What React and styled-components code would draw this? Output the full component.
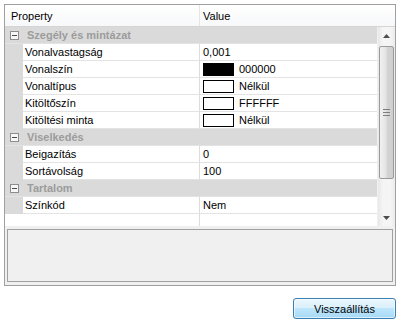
import React from "react"
import styled, { createGlobalStyle } from "styled-components"

const GlobalStyle = createGlobalStyle`
  body {
    margin: 0;
    background: #fff;
    font-family: "Liberation Sans", Arial, sans-serif;
    font-size: 11px;
    color: #000;
  }
`

const Page = styled.div`
  display: flex;
  flex-direction: column;
  align-items: flex-start;
  padding: 4px 0 0 4px;
`

const Frame = styled.div`
  box-sizing: border-box;
  width: 392px;
  height: 282px;
  border: 1px solid #a0a0a0;
  background: #f0f0f0;
  display: flex;
  flex-direction: column;
`

const Grid = styled.div`
  height: 221px;
  display: flex;
  flex-direction: column;
  background: #fff;
`

const Header = styled.div`
  box-sizing: border-box;
  height: 22px;
  display: grid;
  grid-template-columns: 195px 1fr;
  background: linear-gradient(#ffffff, #f7f8fa);
  border-bottom: 1px solid #d5d5d5;
`

const HeaderCell = styled.div`
  display: flex;
  align-items: center;
  padding-left: ${p => p.$pad}px;
  border-right: ${p => (p.$divider ? "1px solid #e5e5e5" : "none")};
`

const Body = styled.div`
  flex: 1;
  display: flex;
  min-height: 0;
`

const Rows = styled.div`
  flex: 1;
  display: flex;
  flex-direction: column;
`

const CategoryRow = styled.div`
  box-sizing: border-box;
  height: 17px;
  display: flex;
  align-items: center;
  background: #dadada;
  border-bottom: 1px solid #e3e3e3;
`

const Toggle = styled.span`
  box-sizing: border-box;
  width: 9px;
  height: 9px;
  margin: 0 8px 0 5px;
  border: 1px solid #8d8d8d;
  background: #f7f7f7;
  display: flex;
  align-items: center;
  justify-content: center;
  &::after {
    content: "";
    width: 5px;
    height: 1px;
    background: #4a4a4a;
  }
`

const CategoryName = styled.span`
  font-weight: bold;
  color: #9c9c9c;
`

const PropRow = styled.div`
  box-sizing: border-box;
  height: 17px;
  display: grid;
  grid-template-columns: 18px 177px 1fr;
`

const Gutter = styled.div`
  background: #dadada;
`

const NameCell = styled.div`
  display: flex;
  align-items: center;
  padding-left: 2px;
  border-bottom: 1px solid #e3e3e3;
  border-right: 1px solid #dcdcdc;
  white-space: nowrap;
`

const ValueCell = styled.div`
  display: flex;
  align-items: center;
  padding-left: 3px;
  border-bottom: 1px solid #e3e3e3;
  white-space: nowrap;
`

const Swatch = styled.span`
  box-sizing: border-box;
  width: 31px;
  height: 13px;
  border: 1px solid #000;
  background: ${p => p.$color};
  margin-right: 5px;
`

const Filler = styled.div`
  flex: 1;
  display: grid;
  grid-template-columns: 195px 1fr;
`

const FillerLeft = styled.div`
  border-right: 1px solid #dcdcdc;
`

const Scrollbar = styled.div`
  width: 17px;
  display: flex;
  flex-direction: column;
  background: linear-gradient(90deg, #e8e8e8, #f5f5f5 30%, #f5f5f5 70%, #ececec);
  border-left: 1px solid #f0f0f0;
`

const ArrowButton = styled.div`
  height: 17px;
  display: flex;
  align-items: center;
  justify-content: center;
`

const Track = styled.div`
  flex: 1;
  display: flex;
  flex-direction: column;
  padding: 2px 1px 0 1px;
`

const Thumb = styled.div`
  box-sizing: border-box;
  height: 133px;
  border: 1px solid #9b9b9b;
  border-radius: 2px;
  background: linear-gradient(90deg, #f1f1f1, #e4e4e4 45%, #d4d4d4 55%, #cfcfcf);
  display: flex;
  align-items: center;
  justify-content: center;
`

const Grip = styled.div`
  width: 7px;
  height: 7px;
  background: repeating-linear-gradient(#7d7d7d 0 1px, transparent 1px 3px);
`

const Description = styled.div`
  box-sizing: border-box;
  height: 53px;
  margin: 3px 2px 2px 2px;
  border: 1px solid #a0a0a0;
  background: #f0f0f0;
`

const Footer = styled.div`
  width: 392px;
  display: flex;
  justify-content: flex-end;
  padding-top: 12px;
`

const Button = styled.button`
  box-sizing: border-box;
  width: 103px;
  height: 21px;
  border: 1px solid #3c7fb1;
  border-radius: 3px;
  background: linear-gradient(#eaf6fd 0%, #d9f0fc 50%, #bee6fd 50%, #a7d9f5 100%);
  box-shadow: inset 0 0 0 1px rgba(255, 255, 255, 0.6);
  font-family: "Liberation Sans", Arial, sans-serif;
  font-size: 11px;
  color: #000;
  padding: 0;
`

const Arrow = ({ up }) => (
  <svg width="7" height="4" viewBox="0 0 7 4">
    <polygon points={up ? "0,4 7,4 3.5,0" : "0,0 7,0 3.5,4"} fill="#4d4d4d" />
  </svg>
)

const groups = [
  {
    name: "Szegély és mintázat",
    props: [
      { name: "Vonalvastagság", value: "0,001" },
      { name: "Vonalszín", value: "000000", color: "#000" },
      { name: "Vonaltípus", value: "Nélkül", color: "#fff" },
      { name: "Kitöltőszín", value: "FFFFFF", color: "#fff" },
      { name: "Kitöltési minta", value: "Nélkül", color: "#fff" },
    ],
  },
  {
    name: "Viselkedés",
    props: [
      { name: "Beigazítás", value: "0" },
      { name: "Sortávolság", value: "100" },
    ],
  },
  {
    name: "Tartalom",
    props: [{ name: "Színkód", value: "Nem" }],
  },
]

export default function App() {
  return (
    <>
      <GlobalStyle />
      <Page>
        <Frame>
          <Grid>
            <Header>
              <HeaderCell $pad={6} $divider>Property</HeaderCell>
              <HeaderCell $pad={3}>Value</HeaderCell>
            </Header>
            <Body>
              <Rows>
                {groups.map(g => (
                  <React.Fragment key={g.name}>
                    <CategoryRow>
                      <Toggle />
                      <CategoryName>{g.name}</CategoryName>
                    </CategoryRow>
                    {g.props.map(p => (
                      <PropRow key={p.name}>
                        <Gutter />
                        <NameCell>{p.name}</NameCell>
                        <ValueCell>
                          {p.color && <Swatch $color={p.color} />}
                          {p.value}
                        </ValueCell>
                      </PropRow>
                    ))}
                  </React.Fragment>
                ))}
                <Filler>
                  <FillerLeft />
                  <div />
                </Filler>
              </Rows>
              <Scrollbar>
                <ArrowButton>
                  <Arrow up />
                </ArrowButton>
                <Track>
                  <Thumb>
                    <Grip />
                  </Thumb>
                </Track>
                <ArrowButton>
                  <Arrow />
                </ArrowButton>
              </Scrollbar>
            </Body>
          </Grid>
          <Description />
        </Frame>
        <Footer>
          <Button>Visszaállítás</Button>
        </Footer>
      </Page>
    </>
  )
}
